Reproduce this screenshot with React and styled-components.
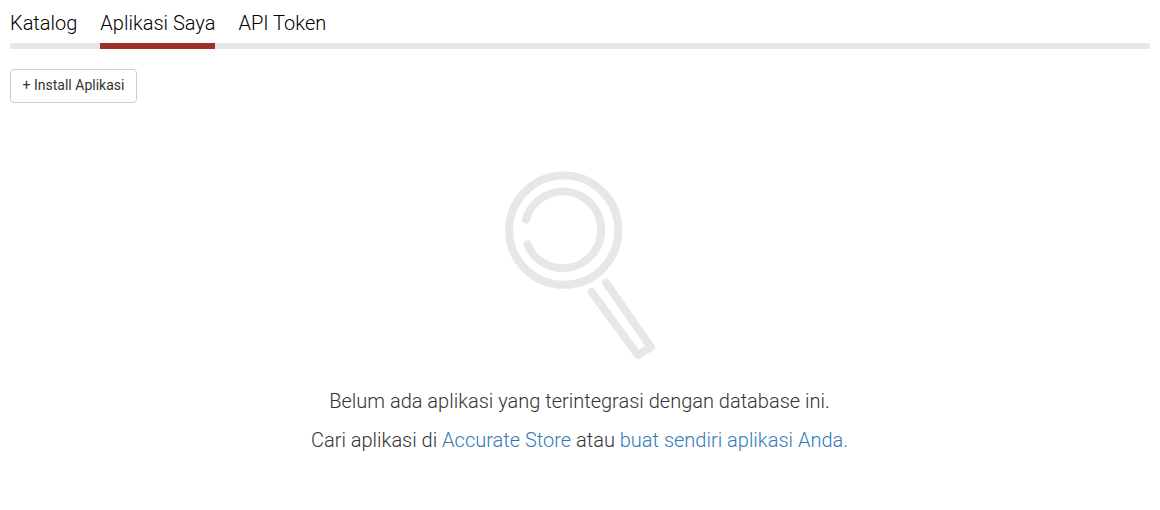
import styled, { createGlobalStyle } from "styled-components";

const GlobalStyle = createGlobalStyle`
    * {
        box-sizing: border-box;
    }

    body {
        margin: 0;
        background: #fff;
        color: #333;
        font-family: Roboto, "Liberation Sans", sans-serif;
    }
`;

const tabs = ["Katalog", "Aplikasi Saya", "API Token"];

function App() {
    return (
        <Page>
            <GlobalStyle />

{/* TABS */}
            <TabBar>
                {tabs.map((tab) => (
                    <Tab key={tab} $active={tab === "Aplikasi Saya"}>{tab}</Tab>
                ))}
            </TabBar>

            <InstallButton>+ Install Aplikasi</InstallButton>

{/* EMPTY STATE */}
            <EmptyState>
                <Magnifier />
                <Message>Belum ada aplikasi yang terintegrasi dengan database ini.</Message>
                <Message>
                    Cari aplikasi di <Link href="#">Accurate Store</Link> atau <Link href="#">buat sendiri aplikasi Anda.</Link>
                </Message>
            </EmptyState>
        </Page>
    );
}

function Magnifier() {
    return (
        <Icon viewBox="500 168 160 194">
            <circle cx="563.8" cy="230.2" r="54.6" />
            <path d="M526 219.5A38.3 38.3 0 1 1 527.5 244.5" />
            <path d="M591.7 292L637.8 355L650.8 347L606 282.8" />
        </Icon>
    );
}

const Page = styled.div`
    height: 510px;
    padding: 0 10px;
    overflow: hidden;
`;

const TabBar = styled.nav`
    display: flex;
    gap: 23px;
    height: 49px;
    border-bottom: 6px solid #e6e7e8;
`;

const Tab = styled.a`
    height: 49px;
    padding-top: 9px;
    border-bottom: 6px solid ${(props) => (props.$active ? '#9f2f28' : 'transparent')};
    color: #000;
    font-size: 20px;
    font-weight: 300;
    line-height: 28px;
    white-space: nowrap;
    cursor: pointer;
`;

const InstallButton = styled.button`
    display: block;
    width: 127px;
    height: 34px;
    margin-top: 20px;
    padding: 0 0 2px;
    border: 1px solid #ccc;
    border-radius: 4px;
    background: #fff;
    color: #333;
    font-family: inherit;
    font-size: 14px;
    line-height: 20px;
`;

const EmptyState = styled.section`
    display: flex;
    flex-direction: column;
    align-items: center;
    margin-top: 65px;
`;

const Icon = styled.svg`
    display: block;
    width: 160px;
    height: 194px;
    margin-bottom: 25px;
    fill: none;
    stroke: #e6e7e9;
    stroke-width: 8px;
    stroke-linecap: round;
    stroke-linejoin: round;
`;

const Message = styled.p`
    margin: 0 0 11px;
    padding-right: 1px;
    font-size: 20px;
    font-weight: 300;
    line-height: 28px;
    white-space: nowrap;
`;

const Link = styled.a`
    color: #337ab7;
    text-decoration: none;
`;

export default App;
